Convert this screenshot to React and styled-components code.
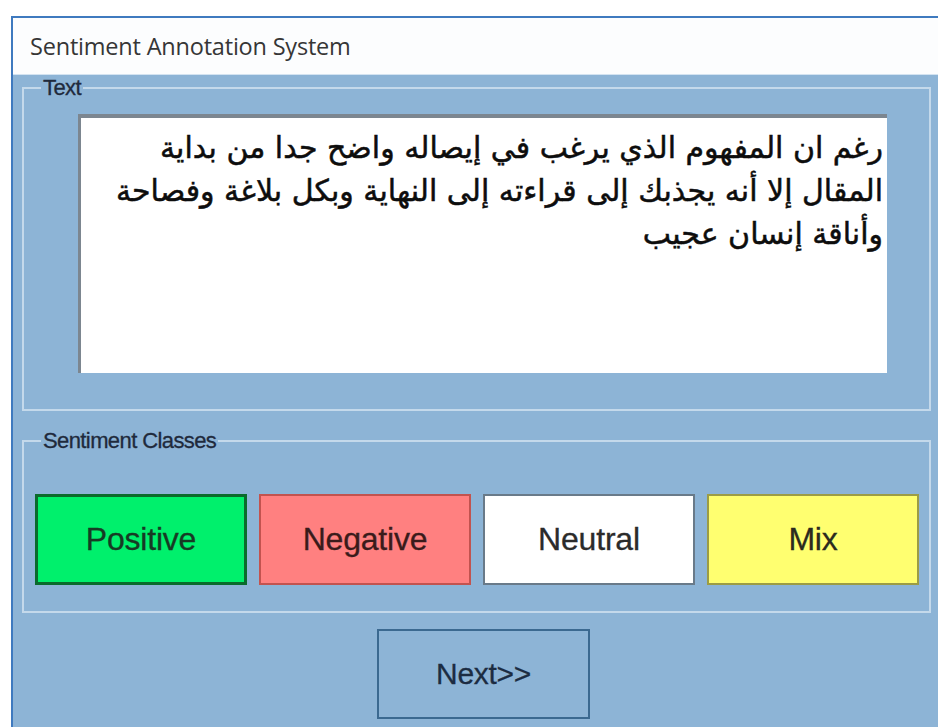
import React from "react";
import styled, { createGlobalStyle } from "styled-components";

const Global = createGlobalStyle`
  html, body {
    margin: 0;
    padding: 0;
    background: #ffffff;
    overflow: hidden;
  }
  body {
    font-family: "Liberation Sans", Arial, sans-serif;
  }
`;

const Window = styled.div`
  margin: 16px 0 0 11px;
  width: 960px;
  height: 740px;
  box-sizing: border-box;
  border-top: 2px solid #3f7abf;
  border-left: 2px solid #3f7abf;
  background: #8db4d6;
  display: flex;
  flex-direction: column;
`;

const TitleBar = styled.header`
  height: 56px;
  flex: none;
  background: #fcfdfe;
  border-bottom: 1px solid #d3e3f1;
  display: flex;
  align-items: center;
  padding-left: 17px;
  font-family: "Open Sans", "Noto Sans", sans-serif;
  font-size: 23.5px;
  letter-spacing: -0.2px;
  color: #363636;
`;

const Client = styled.main`
  display: flex;
  flex-direction: column;
  padding: 0 0 0 9px;
`;

const Group = styled.fieldset`
  box-sizing: border-box;
  width: 909px;
  margin: ${(p) => p.$mt}px 0 0 0;
  padding: ${(p) => p.$pad};
  border: 2px solid #c4d9eb;
  min-inline-size: 0;
`;

const Legend = styled.legend`
  margin-left: 17px;
  padding: 0 2px;
  font-family: "Liberation Sans", Arial, sans-serif;
  font-size: 22px;
  line-height: 24px;
  letter-spacing: -0.6px;
  color: #1f2a3c;
  -webkit-text-stroke: 0.3px #1f2a3c;
`;

const TextBox = styled.div`
  box-sizing: border-box;
  width: 809px;
  height: 259px;
  margin-left: 54px;
  background: #ffffff;
  border-top: 4px solid #7c8690;
  border-left: 3px solid #7c8690;
  padding: 8px 4px 0 0;
  direction: rtl;
  text-align: right;
  font-family: "DejaVu Sans", sans-serif;
  font-size: 30px;
  line-height: 43px;
  color: #0d0d0d;
  -webkit-text-stroke: 0.5px #0d0d0d;
`;

const Line = styled.div`
  white-space: nowrap;
`;

const ClassRow = styled.div`
  display: grid;
  grid-template-columns: repeat(4, 212px);
  column-gap: 12px;
  margin-left: 11px;
`;

const ClassButton = styled.button`
  box-sizing: border-box;
  height: 91px;
  margin: 0;
  padding: 0;
  background: ${(p) => p.$bg};
  border: ${(p) => p.$bw}px solid ${(p) => p.$edge};
  font-family: "Liberation Sans", Arial, sans-serif;
  font-size: 32px;
  color: ${(p) => p.$ink};
  letter-spacing: -0.2px;
  -webkit-text-stroke: 0.3px ${(p) => p.$ink};
  cursor: pointer;
`;

const NextButton = styled.button`
  box-sizing: border-box;
  width: 213px;
  height: 90px;
  margin: 16px 0 0 355px;
  padding: 0;
  background: transparent;
  border: 2px solid #3b6990;
  font-family: "Liberation Sans", Arial, sans-serif;
  font-size: 30px;
  color: #1c2c42;
  letter-spacing: -0.3px;
  -webkit-text-stroke: 0.3px #1c2c42;
  cursor: pointer;
`;

const classes = [
  { label: "Positive", bg: "#00f06c", edge: "#0b6a2c", bw: 3, ink: "#173a24" },
  { label: "Negative", bg: "#ff8080", edge: "#c2534f", bw: 2, ink: "#3a1b1b" },
  { label: "Neutral", bg: "#ffffff", edge: "#697a89", bw: 2, ink: "#2b2b2b" },
  { label: "Mix", bg: "#ffff70", edge: "#9c9c45", bw: 2, ink: "#2b2b1e" },
];

const lines = [
  "رغم ان المفهوم الذي يرغب في إيصاله واضح جدا من بداية",
  "المقال إلا أنه يجذبك إلى قراءته إلى النهاية وبكل بلاغة وفصاحة",
  "وأناقة إنسان عجيب",
];

export default function App() {
  return (
    <>
      <Global />
      <Window>
        <TitleBar>Sentiment Annotation System</TitleBar>
        <Client>
          <Group $mt={1} $pad="14px 0 36px 0">
            <Legend>Text</Legend>
            <TextBox>
              {lines.map((l) => (
                <Line key={l}>{l}</Line>
              ))}
            </TextBox>
          </Group>
          <Group $mt={18} $pad="41px 0 26px 0">
            <Legend>Sentiment Classes</Legend>
            <ClassRow>
              {classes.map((c) => (
                <ClassButton
                  key={c.label}
                  $bg={c.bg}
                  $edge={c.edge}
                  $bw={c.bw}
                  $ink={c.ink}
                >
                  {c.label}
                </ClassButton>
              ))}
            </ClassRow>
          </Group>
          <NextButton>Next&gt;&gt;</NextButton>
        </Client>
      </Window>
    </>
  );
}
